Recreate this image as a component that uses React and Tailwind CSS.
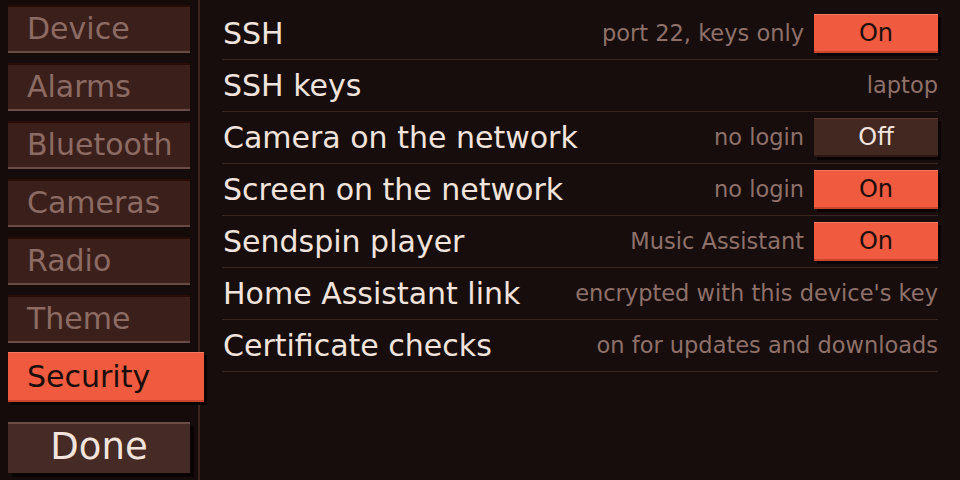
import React from 'react';

const tabs = ['Device', 'Alarms', 'Bluetooth', 'Cameras', 'Radio', 'Theme', 'Security'];

const rows = [
  { title: 'SSH', note: 'port 22, keys only', toggle: true },
  { title: 'SSH keys', note: 'laptop' },
  { title: 'Camera on the network', note: 'no login', toggle: false },
  { title: 'Screen on the network', note: 'no login', toggle: true },
  { title: 'Sendspin player', note: 'Music Assistant', toggle: true },
  { title: 'Home Assistant link', note: "encrypted with this device's key" },
  { title: 'Certificate checks', note: 'on for updates and downloads' },
];

const Toggle = ({ on }) =>
  on ? (
    <button className="w-[124px] h-[39px] bg-[#f05b3f] border-t border-[#f47a60] border-b-2 border-b-[#c9452c] text-[#1a0e0c] text-[24px] leading-none shadow-[3px_3px_0_#0a0504]">
      On
    </button>
  ) : (
    <button className="w-[124px] h-[39px] bg-[#432822] border-t border-[#5a3a33] border-b-2 border-b-[#2a1713] text-[#f2e4dc] text-[24px] leading-none shadow-[3px_3px_0_#0a0504]">
      Off
    </button>
  );

export default function App() {
  const active = 'Security';

  return (
    <div
      className="w-[960px] h-[480px] flex bg-[#160d0c] overflow-hidden"
      style={{ fontFamily: '"DejaVu Sans", sans-serif' }}
    >
      {/* sidebar */}
      <div className="w-[200px] shrink-0 border-r-2 border-[#3a221d] bg-[#140b0a] flex flex-col pt-[5px] pl-[8px]">
        <div className="flex flex-col gap-[10px]">
          {tabs.map((t) =>
            t === active ? (
              <div
                key={t}
                className="w-[196px] h-[50px] -mt-[1px] bg-[#f05b3f] border-t border-[#f47a60] border-b-2 border-b-[#c9452c] text-[#1a0e0c] text-[30px] leading-none flex items-center pl-[19px] shadow-[3px_3px_0_#0a0504]"
              >
                {t}
              </div>
            ) : (
              <div
                key={t}
                className="w-[182px] h-[48px] bg-[#3b1f1a] border-t-2 border-[#2a0c07] border-b-2 border-b-[#6b4b45] text-[#8b6b64] text-[30px] leading-none flex items-center pl-[19px]"
              >
                {t}
              </div>
            )
          )}
        </div>
        <button className="mt-[20px] w-[182px] h-[51px] bg-[#452a25] border-t-2 border-[#6a4d47] text-[#f2e4dc] text-[37px] leading-none flex items-center justify-center pb-[4px] shadow-[4px_4px_0_#0a0504]">
          Done
        </button>
      </div>

      {/* settings list */}
      <div className="flex-1 pl-[22px] pr-[22px] pt-[8px]">
        {rows.map((r) => (
          <div
            key={r.title}
            className="h-[52px] border-b border-[#3a2620] flex items-center gap-[10px]"
          >
            <div className="flex-1 text-[30px] leading-none text-[#f2e4dc] pl-[1px] whitespace-nowrap">
              {r.title}
            </div>
            <div className="text-[22.5px] leading-none text-[#8f716a] whitespace-nowrap">{r.note}</div>
            {r.toggle !== undefined && <Toggle on={r.toggle} />}
          </div>
        ))}
      </div>
    </div>
  );
}
